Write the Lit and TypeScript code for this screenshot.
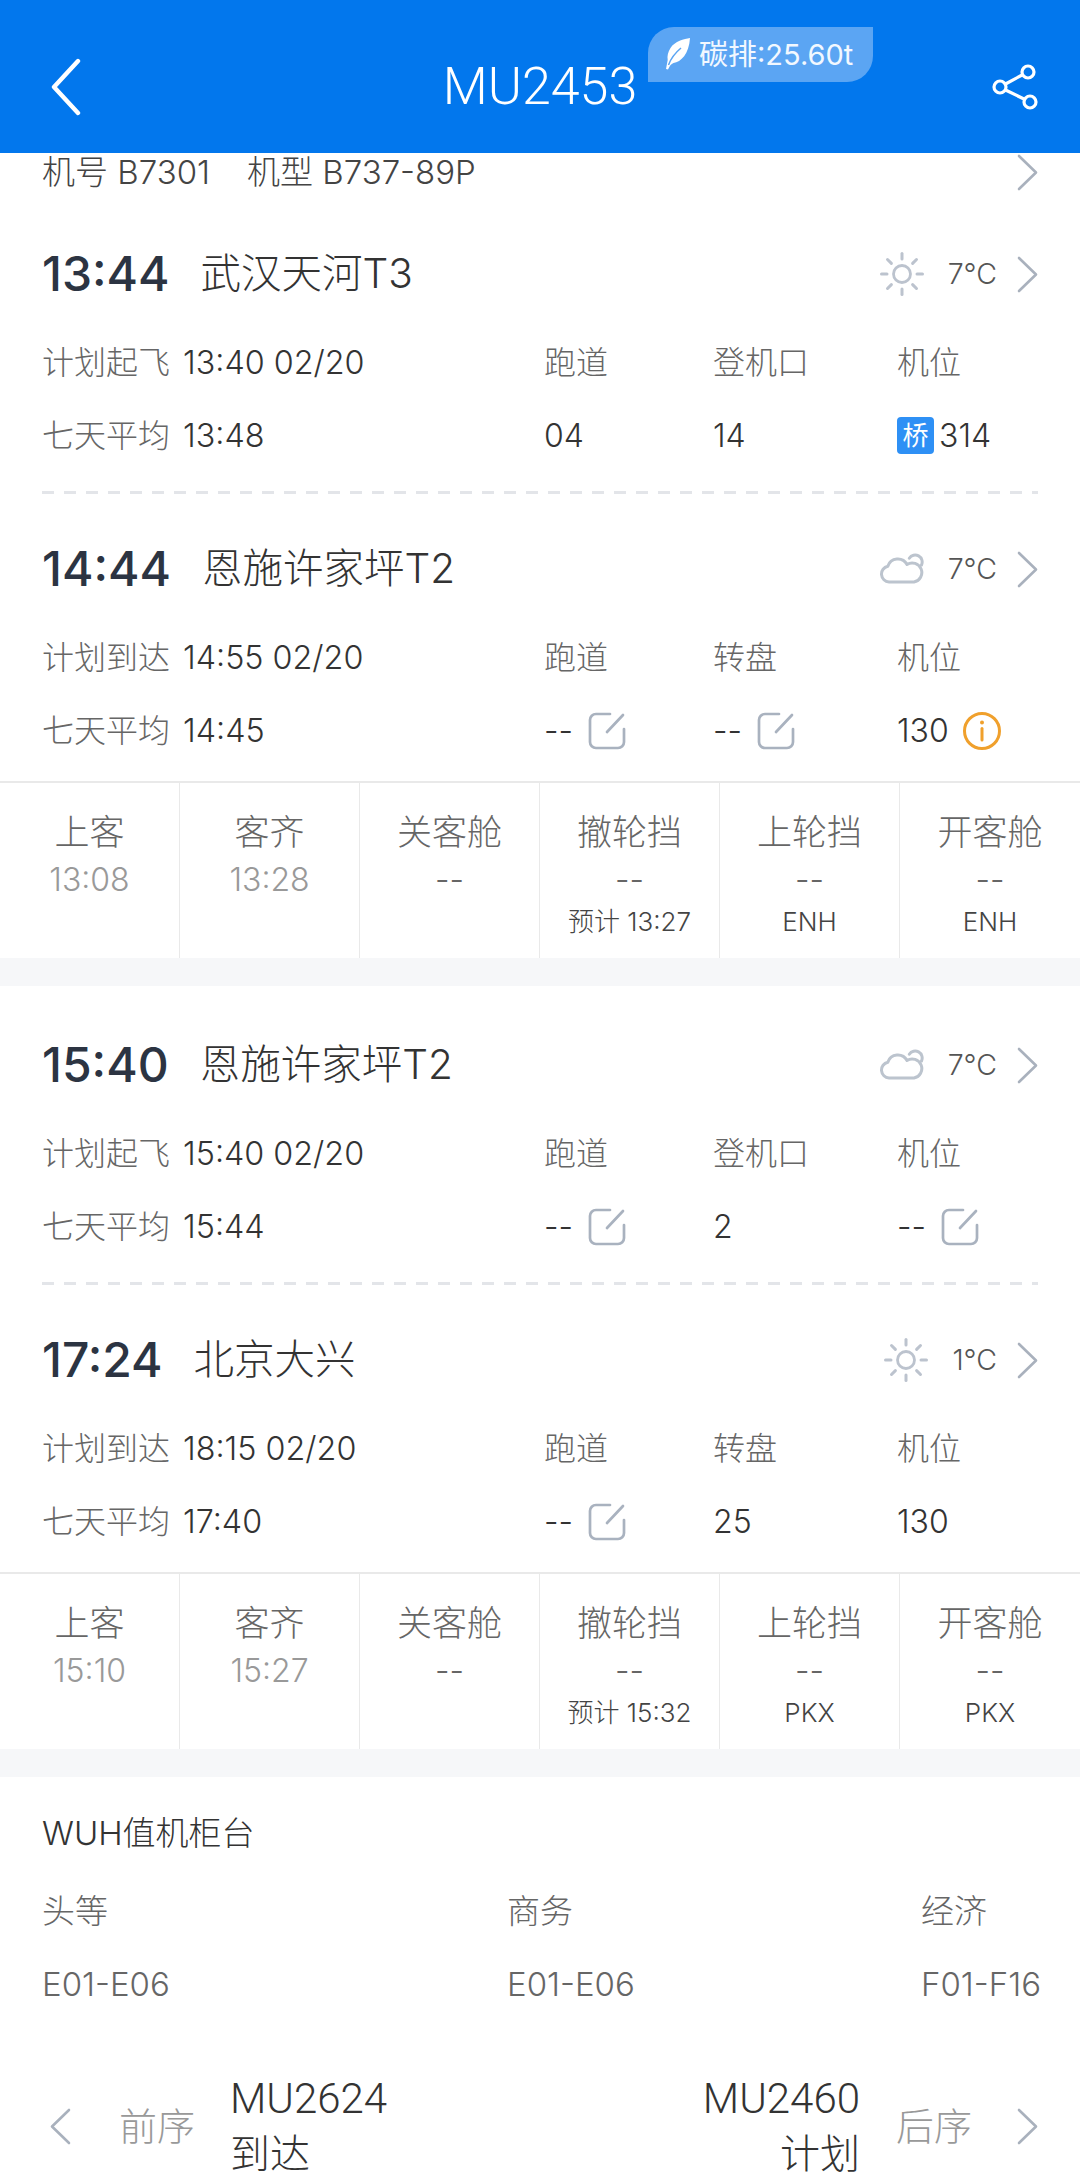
import { LitElement, css, html, svg } from 'lit';
import { customElement } from 'lit/decorators.js';

type Cell = { label: string; value: string; edit?: boolean; bridge?: boolean; info?: boolean };
type Stop = {
    time: string;
    station: string;
    weather: 'sun' | 'cloud';
    temp: string;
    planLabel: string;
    planTime: string;
    avg: string;
    cells: Cell[];
};
type Step = { label: string; value: string; extra?: string };

const chevron = (dir: 'left' | 'right' = 'right') => html`<svg class="chev" width="21" height="37" viewBox="0 0 21 37">
    <path d=${dir === 'right' ? 'M2 2L19 18.5L2 35' : 'M19 2L2 18.5L19 35'} fill="none" stroke="#a9b1bd" stroke-width="2.6" stroke-linecap="round" stroke-linejoin="round"></path>
</svg>`;

const editIcon = () => html`<svg class="edit" width="38" height="38" viewBox="0 0 38 38">
    <path d="M22 2H8a6 6 0 0 0-6 6V30a6 6 0 0 0 6 6H30a6 6 0 0 0 6-6V17" fill="none" stroke="#a9b2bf" stroke-width="2.7" stroke-linecap="round"></path>
    <path d="M35 3L19 20" fill="none" stroke="#a9b2bf" stroke-width="2.7" stroke-linecap="round"></path>
</svg>`;

const infoIcon = () => html`<svg class="info" width="40" height="40" viewBox="0 0 40 40">
    <circle cx="20" cy="20" r="17.5" fill="none" stroke="#f0a02c" stroke-width="3"></circle>
    <circle cx="20" cy="11.5" r="2" fill="#f0a02c"></circle>
    <path d="M20 17.5V29" stroke="#f0a02c" stroke-width="3" stroke-linecap="round"></path>
</svg>`;

const sunRays = [0, 45, 90, 135, 180, 225, 270, 315];
const sunIcon = () => html`<svg width="44" height="44" viewBox="0 0 44 44">
    <circle cx="22" cy="22" r="8.5" fill="none" stroke="#bcc3ce" stroke-width="2.8"></circle>
    ${sunRays.map(
        (a) => svg`<path d="M22 1.5V7" transform="rotate(${a} 22 22)" stroke="#bcc3ce" stroke-width="3" stroke-linecap="round"></path>`
    )}
</svg>`;

const cloudIcon = () => html`<svg width="44" height="32" viewBox="0 0 44 32">
    <path d="M9 29A8 8 0 0 1 7.8 13.2A10.5 10.5 0 0 1 27 11.5A9.6 9.6 0 1 1 34 29Z" fill="none" stroke="#bcc4ce" stroke-width="3" stroke-linejoin="round"></path>
    <path d="M29.3 5.2A7 7 0 0 1 41.5 12" fill="none" stroke="#bcc4ce" stroke-width="3" stroke-linecap="round"></path>
</svg>`;

const firstLeg: Stop[] = [
    {
        time: '13:44',
        station: '武汉天河T3',
        weather: 'sun',
        temp: '7°C',
        planLabel: '计划起飞',
        planTime: '13:40 02/20',
        avg: '13:48',
        cells: [
            { label: '跑道', value: '04' },
            { label: '登机口', value: '14' },
            { label: '机位', value: '314', bridge: true },
        ],
    },
    {
        time: '14:44',
        station: '恩施许家坪T2',
        weather: 'cloud',
        temp: '7°C',
        planLabel: '计划到达',
        planTime: '14:55 02/20',
        avg: '14:45',
        cells: [
            { label: '跑道', value: '--', edit: true },
            { label: '转盘', value: '--', edit: true },
            { label: '机位', value: '130', info: true },
        ],
    },
];

const secondLeg: Stop[] = [
    {
        time: '15:40',
        station: '恩施许家坪T2',
        weather: 'cloud',
        temp: '7°C',
        planLabel: '计划起飞',
        planTime: '15:40 02/20',
        avg: '15:44',
        cells: [
            { label: '跑道', value: '--', edit: true },
            { label: '登机口', value: '2' },
            { label: '机位', value: '--', edit: true },
        ],
    },
    {
        time: '17:24',
        station: '北京大兴',
        weather: 'sun',
        temp: '1°C',
        planLabel: '计划到达',
        planTime: '18:15 02/20',
        avg: '17:40',
        cells: [
            { label: '跑道', value: '--', edit: true },
            { label: '转盘', value: '25' },
            { label: '机位', value: '130' },
        ],
    },
];

const firstSteps: Step[] = [
    { label: '上客', value: '13:08' },
    { label: '客齐', value: '13:28' },
    { label: '关客舱', value: '--' },
    { label: '撤轮挡', value: '--', extra: '预计 13:27' },
    { label: '上轮挡', value: '--', extra: 'ENH' },
    { label: '开客舱', value: '--', extra: 'ENH' },
];

const secondSteps: Step[] = [
    { label: '上客', value: '15:10' },
    { label: '客齐', value: '15:27' },
    { label: '关客舱', value: '--' },
    { label: '撤轮挡', value: '--', extra: '预计 15:32' },
    { label: '上轮挡', value: '--', extra: 'PKX' },
    { label: '开客舱', value: '--', extra: 'PKX' },
];

@customElement('app-root')
export class AppRoot extends LitElement {
    static styles = css`
        :host {
            display: block;
            width: 1080px;
            height: 2180px;
            overflow: hidden;
            background: #fff;
            color: #333;
            font-family: Inter, 'Noto Sans CJK SC', sans-serif;
            font-weight: 300;
            font-size: 32px;
            line-height: 40px;
        }

        svg {
            display: block;
            flex: none;
        }

        .header {
            position: relative;
            box-sizing: border-box;
            height: 153px;
            padding: 21px 42px 0;
            display: grid;
            grid-template-columns: 1fr auto 1fr;
            align-items: center;
            background: #0277ed;
            color: #fff;
        }

        .back {
            margin-left: 8px;
        }

        .title {
            font-family: Roboto, sans-serif;
            font-size: 52px;
            line-height: 60px;
        }

        .share {
            justify-self: end;
        }

        .carbon {
            position: absolute;
            left: 648px;
            top: 27px;
            box-sizing: border-box;
            width: 225px;
            height: 55px;
            padding-left: 17px;
            display: flex;
            align-items: center;
            gap: 9px;
            background: #5ba5f3;
            border-radius: 26px 0 26px 0;
            font-size: 29px;
            font-weight: 400;
            color: #f2f8ff;
        }

        .plane {
            height: 38px;
            padding: 0 42px;
            display: flex;
            align-items: center;
            justify-content: space-between;
            font-size: 33px;
            color: #444;
        }

        .plane span + span {
            margin-left: 37px;
        }

        .leg {
            padding-top: 43px;
        }

        .leg.first {
            padding-top: 47px;
        }

        .stop {
            padding: 0 42px;
        }

        .rule + .stop {
            margin-top: 39px;
        }

        .rule {
            height: 3px;
            margin: 19px 42px 0;
            background: repeating-linear-gradient(90deg, #e3e5e9 0 12px, transparent 12px 22px);
        }

        .head {
            height: 72px;
            margin-bottom: 16px;
            display: flex;
            align-items: center;
        }

        .time {
            font-size: 48px;
            font-weight: 500;
            color: #2c3442;
            margin-right: 31px;
        }

        .station {
            flex: 1;
            font-size: 40.5px;
            color: #333;
        }

        .temp {
            margin: 0 20px 0 24px;
            font-size: 28.5px;
            color: #555;
        }

        .wide {
            display: grid;
            grid-template-columns: 502px 169px 184px 1fr;
            align-items: center;
            height: 73px;
        }

        .label {
            font-size: 32px;
            color: #666;
        }

        .plan b {
            font-size: 32.3px;
            font-weight: 300;
            color: #333;
            margin-left: 13px;
        }

        .value {
            display: flex;
            align-items: center;
            color: #333;
        }

        .value .edit {
            margin-left: 15px;
        }

        .value .info {
            margin-left: 13px;
        }

        .bridge {
            width: 37px;
            height: 37px;
            margin-right: 5px;
            display: flex;
            align-items: center;
            justify-content: center;
            background: #2e90f5;
            border-radius: 4px;
            color: #fff;
            font-size: 26px;
            font-weight: 400;
        }

        .steps {
            display: grid;
            grid-template-columns: repeat(6, 1fr);
            margin-top: 14px;
            border-top: 2px solid #e9e9e9;
        }

        .step {
            box-sizing: border-box;
            height: 175px;
            padding-top: 25px;
            text-align: center;
            border-right: 1px solid #e9e9e9;
        }

        .step:last-child {
            border-right: 0;
        }

        .step-label {
            font-size: 35px;
            line-height: 49px;
            color: #666;
        }

        .step-value {
            font-size: 32px;
            line-height: 45px;
            color: #666;
        }

        .step-value.done {
            color: #999;
        }

        .step-extra {
            font-size: 26px;
            line-height: 40px;
            color: #444;
        }

        .gap {
            height: 28px;
            background: #f6f7f9;
        }

        .counter {
            padding: 31px 42px 0;
            font-size: 33px;
        }

        .counter-title {
            line-height: 50px;
            color: #333;
        }

        .counter-grid {
            display: grid;
            grid-template-columns: 465px 414px 1fr;
            grid-auto-rows: 73px;
            margin-top: 16px;
            align-items: center;
            white-space: nowrap;
            color: #666;
        }

        .nav {
            margin-top: 51px;
            padding: 0 42px 0 50px;
            display: flex;
            align-items: center;
        }

        .seq {
            font-size: 38px;
            color: #999;
            margin: 0 35px 0 48px;
        }

        .seq.next {
            margin: 0 45px 0 36px;
        }

        .flight {
            font-size: 40px;
            line-height: 55px;
            color: #333;
        }

        .flight b {
            font-family: Roboto, sans-serif;
            font-size: 42px;
            font-weight: 300;
        }

        .flight.end {
            margin-left: auto;
            text-align: right;
        }
    `;

    private renderStop(stop: Stop) {
        return html`<div class="stop">
            <div class="head">
                <span class="time">${stop.time}</span>
                <span class="station">${stop.station}</span>
                ${stop.weather === 'sun' ? sunIcon() : cloudIcon()}
                <span class="temp">${stop.temp}</span>
                ${chevron()}
            </div>
            <div class="wide">
                <span class="label plan">${stop.planLabel}<b>${stop.planTime}</b></span>
                ${stop.cells.map((c) => html`<span class="label">${c.label}</span>`)}
            </div>
            <div class="wide">
                <span class="label plan">七天平均<b>${stop.avg}</b></span>
                ${stop.cells.map(
                    (c) => html`<span class="value">
                        ${c.bridge ? html`<span class="bridge">桥</span>` : ''}${c.value}${c.edit ? editIcon() : ''}${c.info ? infoIcon() : ''}
                    </span>`
                )}
            </div>
        </div>`;
    }

    private renderLeg(stops: Stop[], steps: Step[], first = false) {
        return html`<section class="leg ${first ? 'first' : ''}">
                ${this.renderStop(stops[0])}
                <div class="rule"></div>
                ${this.renderStop(stops[1])}
                <div class="steps">
                    ${steps.map(
                        (s) => html`<div class="step">
                            <div class="step-label">${s.label}</div>
                            <div class="step-value ${s.value === '--' ? '' : 'done'}">${s.value}</div>
                            ${s.extra ? html`<div class="step-extra">${s.extra}</div>` : ''}
                        </div>`
                    )}
                </div>
            </section>
            <div class="gap"></div>`;
    }

    render() {
        return html`<header class="header">
                <svg class="back" width="32" height="58" viewBox="0 0 32 58">
                    <path d="M28 3L4 29L28 55" fill="none" stroke="#fff" stroke-width="4.4" stroke-linecap="round" stroke-linejoin="round"></path>
                </svg>
                <div class="title">MU2453</div>
                <svg class="share" width="46" height="46" viewBox="0 0 46 46">
                    <g fill="none" stroke="#fff" stroke-width="3.2">
                        <circle cx="36" cy="8" r="6"></circle>
                        <circle cx="8" cy="23" r="6"></circle>
                        <circle cx="38" cy="38" r="6"></circle>
                        <path d="M13.5 20L31 10.5M13.5 26L33 35.5"></path>
                    </g>
                </svg>
                <div class="carbon">
                    <svg width="25" height="33" viewBox="0 0 25 33">
                        <path d="M25 0C19 1 10 3 5.5 10C3 14 2 18 2.7 22L1 31L3 31.5C4.5 28 6 26 8.5 25C16 24 24 16 25 0Z" fill="#fff"></path>
                        <path d="M3.5 27C6 20 10 15 16 10" fill="none" stroke="#5ba5f3" stroke-width="1.5"></path>
                    </svg>
                    <span>碳排:25.60t</span>
                </div>
            </header>
            <div class="plane">
                <div><span>机号 B7301</span><span>机型 B737-89P</span></div>
                ${chevron()}
            </div>
            ${this.renderLeg(firstLeg, firstSteps, true)}
            ${this.renderLeg(secondLeg, secondSteps)}
            <section class="counter">
                <div class="counter-title">WUH值机柜台</div>
                <div class="counter-grid">
                    <span>头等</span><span>商务</span><span>经济</span>
                    <span>E01-E06</span><span>E01-E06</span><span>F01-F16</span>
                </div>
            </section>
            <nav class="nav">
                ${chevron('left')}
                <span class="seq">前序</span>
                <div class="flight"><b>MU2624</b><br />到达</div>
                <div class="flight end"><b>MU2460</b><br />计划</div>
                <span class="seq next">后序</span>
                ${chevron()}
            </nav>`;
    }
}
